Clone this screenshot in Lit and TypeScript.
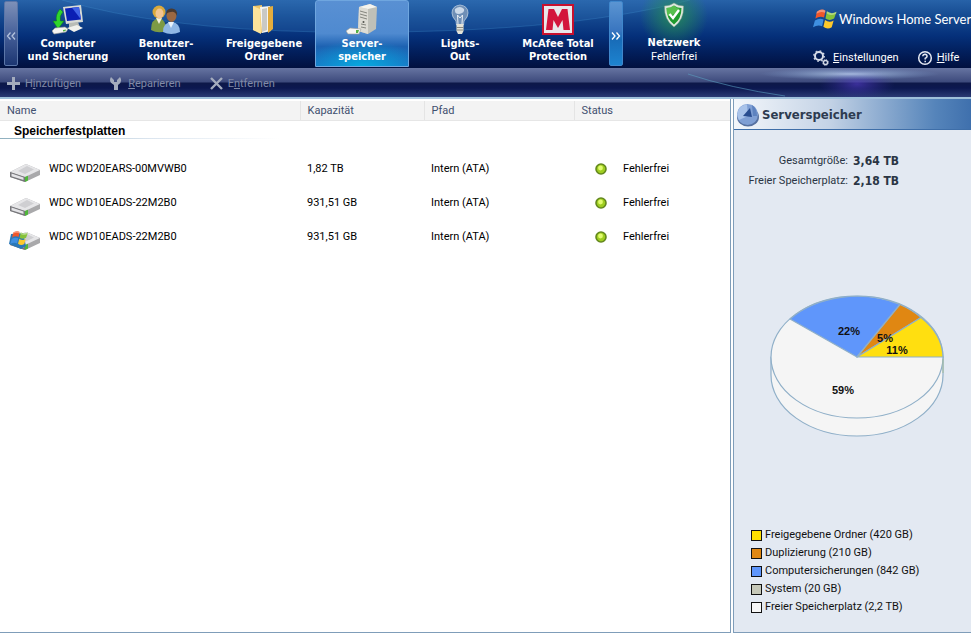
import { LitElement, html, svg, css, nothing } from "lit";
import { customElement, property, state } from "lit/decorators.js";
import { classMap } from "lit/directives/class-map.js";

const flag = svg`
  <path d="M3 5 Q8 1 12 4 L10.500 11 Q6 9 1.500 12 Z" fill="#f0562a"/>
  <path d="M13.500 4.500 Q18 8 23.500 5 L21 12 Q16 15 12 12 Z" fill="#86c23a"/>
  <path d="M1 14 Q6 11 10 13 L8.500 20 Q4 18 -1 21 Z" fill="#3f8fe0"/>
  <path d="M11.500 13.500 Q16 17 20.500 14 L18.500 21 Q14 24 9.800 20.500 Z" fill="#fdc92c"/>
  <path d="M3 5 Q8 1 12 4 L11.500 6 Q7 4 2.500 7 Z M13.500 4.500 Q18 8 23.500 5 L23 7 Q17 10 13 6.500 Z" fill="#fff" opacity=".35"/>`;

const tabIcons: Record<string, unknown> = {
  computer: svg`
    <path d="M11 3 L29 1 L31 18 L14 20 Z" fill="#d9dbd6"/>
    <path d="M13 4.500 L27 3 L29 15.500 L15 17 Z" fill="#0b1fb4"/>
    <path d="M20 3.800 L27 3 L29 15.500 Z" fill="#3f62e6"/>
    <path d="M17 19 L26 18 L28 23 L17 24 Z" fill="#b9bcb6"/>
    <path d="M15 24 L25 21 L31 24 L22 28 Z" fill="#f1f1ec"/>
    <path d="M8 5 Q3 11 4.500 17 L1 17 L6 25 L12 17 L8.500 17 Q7 12 11 8 Z" fill="#2fd52c" stroke="#0f7f1c" stroke-width=".6"/>
    <path d="M0 27 L3 24 L13 23 L16 25 L14 28 L2 30 Z" fill="#f4f4f2" stroke="#9a9a94" stroke-width=".6"/>
    <path d="M11 26 L14 25.500 L13.500 27 L11 27.500Z" fill="#55b043"/>`,
  users: svg`
    <path d="M1 26 Q1 15 9 14 Q16 15 16 27 Q8 30 1 26Z" fill="#7d9a45"/>
    <path d="M6 14 L9 20 L12 14 Z" fill="#f2f0df"/>
    <circle cx="9" cy="8" r="6.500" fill="#d9a93c"/>
    <ellipse cx="9.500" cy="9.500" rx="4" ry="5" fill="#f2c592"/>
    <path d="M13 28 Q13 18 22 18 Q30 19 30 28 Q21 32 13 28Z" fill="#8fb7e6"/>
    <path d="M18 18 L21 24 L24 18Z" fill="#e8f2fc"/>
    <ellipse cx="21.500" cy="11.500" rx="5" ry="6.500" fill="#9b6842"/>
    <path d="M16 11 Q16 4 22 4.500 Q28 5 27 12 Q25 7 21 8 Q17 8 16 11Z" fill="#4a3a30"/>`,
  folder: svg`
    <path d="M5 2 L14 1 L14 29 L5 26 Z" fill="#eec465"/>
    <path d="M12 3 L22 2 L23 27 L14 29 Z" fill="#f5f5f1"/>
    <path d="M14 5 L19 4 L19 26 L14 28 Z" fill="#c9c9c4"/>
    <path d="M20 3 L25 2 L25 25 L20 29 Z" fill="#e3ad3e"/>
    <path d="M5 2 L12 5 L13 30 L5 26 Z" fill="#fbe39b"/>`,
  server: svg`
    <path d="M13 3 L24 0 L31 3 L30 25 L22 30 L12 27 Z" fill="#bfc0b8"/>
    <path d="M13 3 L22 5 L22 30 L12 27 Z" fill="#dddcd4"/>
    <path d="M13 3 L24 0 L31 3 L22 5 Z" fill="#f5f4ee"/>
    <path d="M14 7 L21 9 M14 10 L21 12 M14 13 L21 15 M15 20 L20 21 M15 23 L20 24" stroke="#85867f"/>
    <circle cx="17.500" cy="18" r="1" fill="#52534e"/>
    <path d="M0 27 L4 24 L15 25 L13 30 L2 30 Z" fill="#f6f6f2" stroke="#9b9b95" stroke-width=".6"/>
    <path d="M10 26 L13 26 L12 29 L10 29Z" fill="#55b043"/>`,
  bulb: svg`
    <path d="M16 1 Q24 2 24 9 Q24 13 20 17 L19.500 21 L12.500 21 L12 17 Q8 13 8 9 Q8 2 16 1Z" fill="#6f8fb6" stroke="#b9cbe0" stroke-width=".8"/>
    <path d="M11 5 Q16 1 20 5 Q21 9 15 10 Q10 10 11 5Z" fill="#eaf2fa" opacity=".75"/>
    <path d="M14 20 L13.500 11 L16 14 L18.500 11 L18 20" fill="none" stroke="#e8eef5"/>
    <path d="M12.500 20 H19.500 V27 L18 30 H14 L12.500 27Z" fill="#e4e3d8"/>
    <path d="M12.500 23.500 H19.500 M12.500 26 H19.500" stroke="#8b8a82"/>`,
  mcafee: svg`
    <rect x="0" y="0" width="32" height="31" fill="#c8102e"/>
    <rect x="2" y="2" width="28" height="27" fill="#e9e6ea"/>
    <path d="M4 26 L6.500 5 H12 L16 13 L20 5 H25.500 L28 26 H21.500 L20.500 16 L16 24 L11.500 16 L10.500 26 Z" fill="#d3143c"/>`,
};

const accessKey = (text: string, at: number) =>
  html`${text.slice(0, at)}<u>${text[at]}</u>${text.slice(at + 1)}`;

const base = css`
  :host, *, *::before { box-sizing: border-box; }
  button { font: inherit; color: inherit; background: none; border: 0; padding: 0; margin: 0; }
  svg { display: block; flex: none; }
`;

@customElement("console-header")
class ConsoleHeader extends LitElement {
  @state() private active = "server";

  private tabs = [
    ["computer", "Computer", "und Sicherung"],
    ["users", "Benutzer-", "konten"],
    ["folder", "Freigegebene", "Ordner"],
    ["server", "Server-", "speicher"],
    ["bulb", "Lights-", "Out"],
    ["mcafee", "McAfee Total", "Protection"],
  ];

  static styles = [base, css`
    :host {
      display: flex; position: relative; overflow: hidden; height: 68px; padding-left: 4px; color: #fff;
      background: linear-gradient(#2762a8 0, #154a91 16px, #05307a 36px, #021f5c 52px, #01103f 100%);
    }
    .swoosh { position: absolute; inset: 0; width: 100%; height: 100%; }
    .scroll { position: relative; width: 14px; height: 65px; margin-top: 1px; flex: none; border-radius: 2px;
      border: 1px solid #5b76a8; background: linear-gradient(#7d90b8, #47619a 50%, #1c3672); color: #b3c2dd; padding: 0; }
    .scroll svg { margin: 4px auto 0; }
    .next { background: linear-gradient(#5b95d2, #3a76c0 45%, #186cb8 60%, #1d83cf); border-color: #3f87cc; color: #fff; }
    nav { position: relative; display: flex; flex: none; padding: 0 2px 0 1px; }
    .tab { width: 98px; height: 67px; padding-top: 3px; border: 1px solid transparent; border-radius: 3px 3px 0 0;
      background-clip: padding-box; display: flex; flex-direction: column; align-items: center;
      font: bold 11px/13px "DejaVu Sans Condensed", "DejaVu Sans", sans-serif; white-space: nowrap; }
    .tab svg { margin-bottom: 2px; }
    .on { width: 94px; margin: 0 2px; border-color: #6fa6df;
      background: radial-gradient(ellipse 60px 26px at 50% 100%, #06a8de, transparent), linear-gradient(#5990d3, #4f8ad0 50%, #1d62b2 70%, #1a73c4); }
    .net { position: relative; flex: none; width: 102px; padding-top: 1px; display: flex; flex-direction: column; align-items: center;
      font: 11px/14px "DejaVu Sans Condensed", "DejaVu Sans", sans-serif;
      background: radial-gradient(circle 34px at 50% 16px, rgba(40, 150, 80, .8), transparent); }
    .net svg { margin-bottom: 7px; }
    .net span { font: 11px/14px Roboto, sans-serif; }
    .right { position: relative; margin-left: auto; flex: none; width: 158px; padding-top: 5px; }
    .brand { display: flex; align-items: center; gap: 2px; height: 28px; white-space: nowrap; font: 13px/20px Lato, sans-serif; }
    .links { display: flex; gap: 18px; margin-top: 16px; font: 11px/18px Roboto, sans-serif; }
    .links a { display: flex; align-items: center; gap: 4px; color: #fff; text-decoration: none; }
  `];

  private chevrons(right: boolean) {
    return svg`<svg width="10" height="10" viewBox="0 0 10 10" aria-hidden="true"><path
      d=${right ? "M1 1.500 L4 5 L1 8.500 M5.500 1.500 L8.500 5 L5.500 8.500" : "M4.500 1.500 L1.500 5 L4.500 8.500 M9 1.500 L6 5 L9 8.500"}
      fill="none" stroke="currentColor" stroke-width="1.300"/></svg>`;
  }

  render() {
    return html`
      <svg class="swoosh" viewBox="0 0 971 68" preserveAspectRatio="none" aria-hidden="true">
        <path d="M62 0 Q160 29 320 32 Q560 35 690 0 Z" fill="#3b80c6" opacity=".2"/>
        <path d="M62 0 Q160 29 320 32 Q560 35 690 0" fill="none" stroke="#4d9edb" opacity=".25"/>
      </svg>
      <button class="scroll" aria-label="Zurück">${this.chevrons(false)}</button>
      <nav>
        ${this.tabs.map(([id, a, b]) => html`
          <button class=${classMap({ tab: true, on: id === this.active })} @click=${() => (this.active = id)}>
            <svg width="32" height="31" viewBox="0 0 32 31" aria-hidden="true">${tabIcons[id]}</svg>
            <span>${a}</span><span>${b}</span>
          </button>`)}
      </nav>
      <button class="scroll next" aria-label="Weiter">${this.chevrons(true)}</button>
      <div class="net">
        <svg width="24" height="28" viewBox="0 0 24 28" aria-hidden="true">
          <path d="M12 2 Q16 5 21.500 5 Q22 19 12 26 Q2 19 2.500 5 Q8 5 12 2Z" fill="#dfe9df" stroke="#8aa08c" stroke-width=".5"/>
          <path d="M12 4.500 Q15.500 7 19.500 7 Q19.500 18 12 23.500 Q4.500 18 4.500 7 Q8.500 7 12 4.500Z" fill="#1f9a2d"/>
          <path d="M12 4.500 Q8.500 7 4.500 7 Q4.500 12 6 15 Q12 15 18 8 Q14.500 7 12 4.500Z" fill="#6fce5d" opacity=".7"/>
          <path d="M7.500 13 L11 17 L17 9" fill="none" stroke="#fff" stroke-width="2.400"/>
        </svg>
        <b>Netzwerk</b><span>Fehlerfrei</span>
      </div>
      <div class="right">
        <div class="brand">
          <svg width="24" height="24" viewBox="-1 0 25 25" aria-hidden="true">${flag}</svg>
          <span>Windows Home Server</span>
        </div>
        <div class="links">
          <a href="#einstellungen">
            <svg width="16" height="16" viewBox="0 0 16 16" aria-hidden="true" fill="none" stroke="#d5dbe8">
              <circle cx="6" cy="6" r="4" stroke-width="2"/><circle cx="6" cy="6" r="5.300" stroke-width="1.200" stroke-dasharray="1.700 2.460"/>
              <circle cx="12.500" cy="12.500" r="2" stroke-width="1.300"/><circle cx="12.500" cy="12.500" r="3" stroke-width=".8" stroke-dasharray="1.200 1.156"/>
            </svg><span>${accessKey("Einstellungen", 0)}</span></a>
          <a href="#hilfe">
            <svg width="16" height="16" viewBox="0 0 16 16" aria-hidden="true" fill="none" stroke="#e6eaf3">
              <circle cx="8" cy="8" r="6.300" stroke-width="1.500"/>
              <path d="M5.800 6.300 Q6 4.300 8 4.300 Q10.300 4.500 10 6.500 Q9.800 7.500 8.200 8.300 V9.600 M8.200 10.800 V12.200" stroke-width="1.500"/>
            </svg><span>${accessKey("Hilfe", 0)}</span></a>
        </div>
      </div>`;
  }
}

@customElement("action-bar")
class ActionBar extends LitElement {
  static styles = [base, css`
    :host { display: flex; position: relative; overflow: hidden; height: 31px; padding: 2px 0 0 6px; gap: 28px; align-items: center;
      border-bottom: 2px solid #9fc0da; color: #8089a6; font: 11px/14px Roboto, sans-serif;
      background: linear-gradient(#6674a1 0, #3d4a7c 14px, #0d1848 15px, #0c1850 20px, #2a3a73 100%); }
    .glow { position: absolute; inset: 0; width: 100%; height: 100%; }
    button { position: relative; display: flex; align-items: center; gap: 4px; }
  `];

  render() {
    return html`
      <svg class="glow" viewBox="0 0 971 29" preserveAspectRatio="none" aria-hidden="true">
        <defs>
          <radialGradient id="violet"><stop stop-color="#5a3fd0" stop-opacity=".6"/><stop offset="1" stop-color="#3a2fa0" stop-opacity="0"/></radialGradient>
          <radialGradient id="shine"><stop stop-color="#c9e0fa" stop-opacity=".7"/><stop offset="1" stop-color="#89aee0" stop-opacity="0"/></radialGradient>
        </defs>
        <ellipse cx="857" cy="16" rx="38" ry="16" fill="url(#violet)"/>
        <ellipse cx="850" cy="6" rx="90" ry="6" fill="url(#shine)"/>
        <path d="M688 6 Q730 20 785 28" fill="none" stroke="#5a9fc0" opacity=".6"/>
      </svg>
      <button disabled><svg width="15" height="15" viewBox="0 0 15 15" aria-hidden="true"><path d="M7.500 1V14M1 7.500H14" stroke="#a4acbd" stroke-width="3"/></svg><span>${accessKey("Hinzufügen", 1)}</span></button>
      <button disabled><svg width="15" height="15" viewBox="0 0 15 15" aria-hidden="true"><path d="M2 1 L5 4 V6 H8 V4 L11 1 Q14 6 9 9 V14 H5 V9 Q-1 6 2 1Z" fill="#a4acbd"/></svg><span>${accessKey("Reparieren", 0)}</span></button>
      <button disabled><svg width="15" height="15" viewBox="0 0 15 15" aria-hidden="true"><path d="M2 2 L13 13 M13 2 L2 13" stroke="#a4acbd" stroke-width="2.400"/></svg><span>${accessKey("Entfernen", 1)}</span></button>`;
  }
}

interface Disk { name: string; size: string; path: string; status: string; system?: boolean; }

@customElement("disk-table")
class DiskTable extends LitElement {
  @property({ attribute: false }) disks: Disk[] = [];

  static styles = [base, css`
    :host { display: block; background: #fff; border-right: 1px solid #7f9db9; border-bottom: 1px solid #7f9db9; padding-top: 2px; }
    table { width: 100%; border-collapse: collapse; table-layout: fixed; font: 11px/14px Roboto, sans-serif; color: #000; }
    th, td { padding: 2px 0 0 7px; text-align: left; white-space: nowrap; }
    thead th { height: 19px; background: #f3f3f3; color: #3f4f6f; font-weight: normal; border-right: 1px solid #e4e4e4; border-bottom: 1px solid #e6e6e6; }
    thead th:last-child { border-right: 0; }
    .name { width: 300px; } .size { width: 124px; } .path { width: 150px; }
    .group th { height: 18px; padding-left: 14px; font: bold 12px/16px "Liberation Sans", sans-serif;
      background: linear-gradient(90deg, #8fb0bf, #dbe5ef 150px, transparent 280px) bottom / 100% 1px no-repeat; }
    .space td { height: 12px; }
    .disk td { height: 34px; }
    .cell { display: flex; align-items: center; gap: 8px; padding-left: 2px; }
    .cell svg { margin-top: 6px; }
    .state { display: flex; align-items: center; gap: 16px; padding-left: 14px; }
  `];

  private drive(system?: boolean) {
    return svg`<svg width="32" height="22" viewBox="0 0 32 22" aria-hidden="true">
      <path d="M1 11 L17 3 L31 9 L31 14 L16 21 L1 16Z" fill="#a9a9ab"/>
      <path d="M1 11 L17 3 L31 9 L16 16Z" fill="#e6e6e8"/>
      <path d="M9 10 L18 5 L25 8.500 L16 13Z" fill="#cfcfd2"/>
      <path d="M1 11 L16 16 L16 21 L1 16Z" fill="#77777b"/>
      <path d="M2.500 12.500 L14.500 16.500 L14.500 19 L2.500 15.200Z" fill="#e4e4e7"/>
      <path d="M16 16 L19 14.700 V19.500 L16 21Z" fill="#4fb63a"/>
      ${system ? svg`<path d="M2 5 L14 4 L17 17 L12 20 L0 15Z" fill="#2a78b8"/><g transform="translate(2 0) scale(.72)">${flag}</g>` : nothing}
    </svg>`;
  }

  render() {
    return html`<table>
      <thead><tr><th class="name">Name</th><th class="size">Kapazität</th><th class="path">Pfad</th><th>Status</th></tr></thead>
      <tbody>
        <tr class="group"><th colspan="4" scope="rowgroup">Speicherfestplatten</th></tr>
        <tr class="space"><td colspan="4"></td></tr>
        ${this.disks.map((d) => html`<tr class="disk">
          <td><div class="cell">${this.drive(d.system)}<span>${d.name}</span></div></td>
          <td>${d.size}</td><td>${d.path}</td>
          <td><div class="state"><svg width="12" height="12" viewBox="0 0 12 12" aria-hidden="true">
            <circle cx="6" cy="6" r="5" fill="#9fce20" stroke="#63871d" stroke-width="1.600"/><circle cx="5.500" cy="5" r="2.400" fill="#e2fb70"/></svg><span>${d.status}</span></div></td>
        </tr>`)}
      </tbody></table>`;
  }
}

@customElement("storage-panel")
class StoragePanel extends LitElement {
  private totals = [["Gesamtgröße:", "3,64 TB"], ["Freier Speicherplatz:", "2,18 TB"]];
  private legend = [
    ["#ffe000", "Freigegebene Ordner (420 GB)"],
    ["#e08712", "Duplizierung (210 GB)"],
    ["#5f96fb", "Computersicherungen (842 GB)"],
    ["#c6c8b8", "System (20 GB)"],
    ["#f7f7f7", "Freier Speicherplatz (2,2 TB)"],
  ];

  static styles = [base, css`
    :host { display: flex; flex-direction: column; background: #e3e9f2; border: solid #7f9db9; border-width: 0 0 1px 1px; color: #2a3544;
      font: 11px/18px Roboto, sans-serif; }
    h2 { margin: 0; height: 31px; display: flex; align-items: center; gap: 2px; padding: 2px 0 0 2px; color: #2d3b50; border-bottom: 1px solid #3e6ea8;
      font: bold 13px/20px "DejaVu Sans Condensed", "DejaVu Sans", sans-serif; background: linear-gradient(90deg, #f4f7fb, #c4d3e6 40%, #5584ba 85%, #3f70ad); }
    dl { margin: 22px 72px 0 0; display: grid; grid-template-columns: 1fr auto; gap: 2px 5px; text-align: right; white-space: nowrap; }
    dt, dd { margin: 0; }
    dd { font: bold 12px/18px "DejaVu Sans Condensed", "DejaVu Sans", sans-serif; }
    .pie { margin: 101px 0 0 33px; font: bold 11px "Liberation Sans", sans-serif; }
    ul { list-style: none; margin: auto 0 16px 17px; padding: 0; color: #111; }
    li { display: flex; align-items: center; gap: 3px; white-space: nowrap; }
    .key { width: 11px; height: 11px; border: 1px solid #111; }
  `];

  render() {
    return html`
      <h2><svg width="24" height="24" viewBox="0 0 24 24" aria-hidden="true">
        <ellipse cx="12" cy="14" rx="11" ry="9.500" fill="#56709f"/><circle cx="11.500" cy="11.500" r="10.500" fill="#7f9fd4"/>
        <path d="M11 1.500 A10 10 0 0 0 3 17 L12 13Z" fill="#a9c3ea"/>
        <path d="M14 5 L7 13 L16 14Z" fill="#284c8f"/><path d="M16 2 Q21 5 21 13 L17 13Z" fill="#5d82bf"/>
      </svg>Serverspeicher</h2>
      <dl>${this.totals.map(([k, v]) => html`<dt>${k}</dt><dd>${v}</dd>`)}</dl>
      <svg class="pie" width="180" height="148" viewBox="0 0 180 148" role="img" aria-label="Speicherbelegung">
        <g stroke="#8fafc8" stroke-width="1.200" stroke-linejoin="round">
          <path d="M4 66 V84 A86 61 0 0 0 176 84 V66 Z" fill="#f5f5f5"/>
          <ellipse cx="90" cy="66" rx="86" ry="61" fill="#f5f5f5"/>
          <path d="M90 66 L23 28 A86 61 0 0 1 133 13.500 Z" fill="#5f96fb"/>
          <path d="M90 66 L133 13.500 A86 61 0 0 1 154 26.500 Z" fill="#e08712"/>
          <path d="M90 66 L154 26.500 A86 61 0 0 1 176 66 Z" fill="#ffdf10"/>
        </g>
        <path d="M176 68 V82" stroke="#a6bd9c"/>
        <g fill="#111" text-anchor="middle">
          <text x="82" y="44">22%</text><text x="118" y="51">5%</text><text x="130" y="63">11%</text><text x="76" y="103">59%</text>
        </g>
      </svg>
      <ul>${this.legend.map(([c, t]) => html`<li><span class="key" style="background:${c}"></span>${t}</li>`)}</ul>`;
  }
}

@customElement("app-root")
class AppRoot extends LitElement {
  private disks: Disk[] = [
    { name: "WDC WD20EARS-00MVWB0", size: "1,82 TB", path: "Intern (ATA)", status: "Fehlerfrei" },
    { name: "WDC WD10EADS-22M2B0", size: "931,51 GB", path: "Intern (ATA)", status: "Fehlerfrei" },
    { name: "WDC WD10EADS-22M2B0", size: "931,51 GB", path: "Intern (ATA)", status: "Fehlerfrei", system: true },
  ];

  static styles = css`
    :host { display: flex; flex-direction: column; min-height: 100vh; overflow: hidden; background: #fff; }
    main { flex: 1; display: grid; grid-template-columns: minmax(0, 1fr) 238px; gap: 2px; }
  `;

  render() {
    return html`<console-header></console-header><action-bar></action-bar>
      <main><disk-table .disks=${this.disks}></disk-table><storage-panel></storage-panel></main>`;
  }
}
